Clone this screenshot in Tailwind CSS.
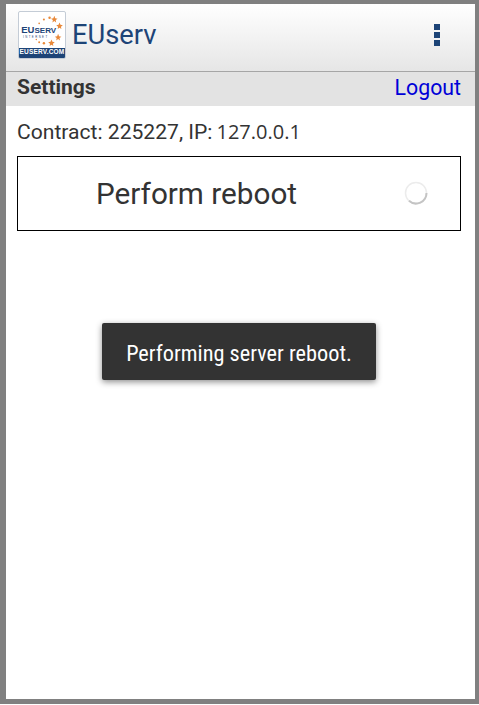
<!DOCTYPE html>
<html lang="en">
  <head>
    <meta charset="UTF-8" />
    <meta name="viewport" content="width=device-width, initial-scale=1.0" />
    <title>EUserv</title>
    <script src="https://cdn.jsdelivr.net/npm/@tailwindcss/browser@4"></script>
  </head>
  <body class="bg-white font-['Roboto',sans-serif] text-[#333]">
    <div class="relative h-[704px] w-[479px] border-t-4 border-r-4 border-b-[5px] border-l-[6px] border-[#808080] bg-white overflow-hidden">
      <!-- header -->
      <header class="flex h-[68px] items-center justify-between border-b border-[#a6a6a6] bg-gradient-to-b from-white to-[#e6e6e6] pl-3 pr-[35px]">
        <div class="flex items-center gap-[7px]">
          <div class="mb-[6px] flex h-[48px] w-[48px] flex-col overflow-hidden rounded-[2px] border border-[#c4ccd6] bg-white">
            <svg class="flex-1" viewBox="0 0 46 38" xmlns="http://www.w3.org/2000/svg">
              <g fill="#e8893a">
                <polygon points="33,5 34,7.500 36.500,8 34.500,9.500 35,12 33,10.500 31,12 31.500,9.500 29.500,8 32,7.500" transform="translate(3 -1)" />
                <polygon points="33,5 34,7.500 36.500,8 34.500,9.500 35,12 33,10.500 31,12 31.500,9.500 29.500,8 32,7.500" transform="translate(8.500 6)" />
                <polygon points="33,5 34,7.500 36.500,8 34.500,9.500 35,12 33,10.500 31,12 31.500,9.500 29.500,8 32,7.500" transform="translate(7 18)" />
                <polygon points="33,5 34,7.500 36.500,8 34.500,9.500 35,12 33,10.500 31,12 31.500,9.500 29.500,8 32,7.500" transform="translate(0 24)" />
                <circle cx="31" cy="6" r="1.300" />
                <circle cx="25" cy="8" r="1.100" />
                <circle cx="20" cy="12" r="0.900" />
                <circle cx="25" cy="33" r="1.300" />
                <circle cx="20" cy="32" r="1" />
                <circle cx="17" cy="29" r="0.800" />
              </g>
              <text x="1" y="22" font-family="Liberation Sans" font-size="10" font-weight="700" fill="#1d4477">EU</text>
              <text x="15" y="22" font-family="Liberation Sans" font-size="8" font-weight="700" fill="#1d4477" textLength="23" lengthAdjust="spacingAndGlyphs">SERV</text>
              <text x="3" y="27" font-family="Liberation Sans" font-size="3" letter-spacing="1.500" fill="#1d4477">INTERNET</text>
            </svg>
            <div class="flex h-[10px] items-center justify-center bg-[#1d4477] font-['Liberation_Sans'] text-[6.500px] font-bold leading-none tracking-[0.2px] text-white">EUSERV.COM</div>
          </div>
          <span class="mb-[3px] -ml-[1px] text-[27.300px] leading-none text-[#1d4477]">EUserv</span>
        </div>
        <div class="mb-[5px] flex flex-col gap-[2px]">
          <span class="block h-[6px] w-[6px] bg-[#1d4477]"></span>
          <span class="block h-[6px] w-[6px] bg-[#1d4477]"></span>
          <span class="block h-[6px] w-[6px] bg-[#1d4477]"></span>
        </div>
      </header>

      <!-- settings bar -->
      <div class="flex h-[34px] items-center justify-between bg-[#e3e3e3] pb-[3px] pl-[11px] pr-[14px]">
        <span class="text-[21px] font-bold">Settings</span>
        <a href="#" class="text-[21.300px] text-[#0000d8]">Logout</a>
      </div>

      <div class="pl-[11px] pr-[14px]">
        <p class="mt-[14px] flex h-6 items-center text-[21.100px] leading-6">
          Contract: 225227, IP:<span class="ml-1 font-['Open_Sans'] text-[20px]">127.0.0.1</span>
        </p>
        <button class="relative mt-3 flex h-[75px] w-full items-center border border-black bg-white pl-[78px] pt-[2px] text-[29.700px]">
          Perform reboot
          <svg class="absolute left-[386px] top-[24px]" width="24" height="24" viewBox="0 0 24 24" fill="none" xmlns="http://www.w3.org/2000/svg">
            <circle cx="12" cy="12" r="10.500" stroke="#ececec" stroke-width="1.500" />
            <path d="M22.500 12A10.500 10.500 0 0 1 5 19.800" stroke="#c4c4c4" stroke-width="2" />
          </svg>
        </button>
      </div>

      <!-- toast -->
      <div class="absolute left-[96px] top-[319px] flex h-[57px] w-[274px] items-center justify-center rounded-[2px] bg-[#333] pt-[5px] font-['Roboto_Condensed','Roboto',sans-serif] text-[22.300px] text-white shadow-[0_2px_6px_rgba(0,0,0,0.45)]">
        <span class="inline-block">Performing server reboot.</span>
      </div>
    </div>
  </body>
</html>
